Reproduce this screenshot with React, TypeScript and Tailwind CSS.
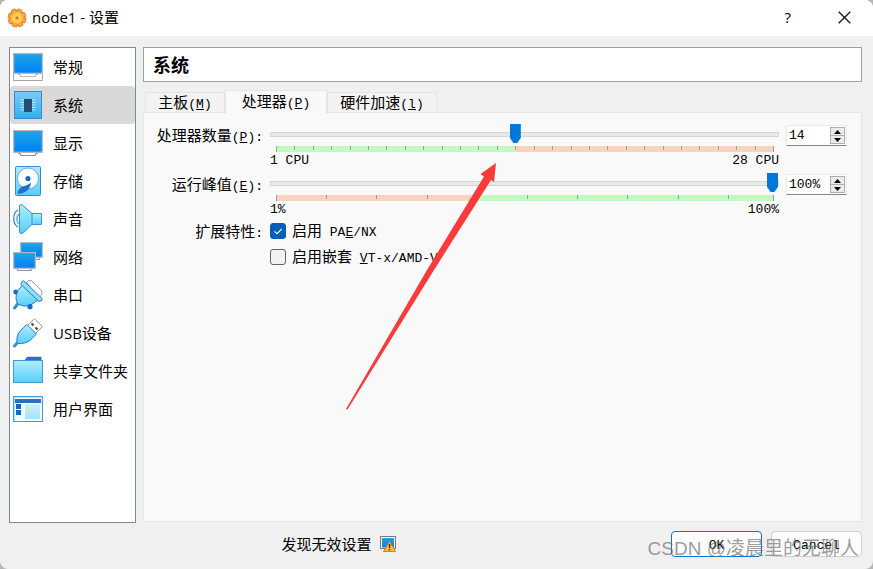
import React, { useState } from 'react';

const Screen: React.FC<{ x: number; y: number; w: number; h: number }> = ({ x, y, w, h }) => (
  <>
    <rect x={x + 0.5} y={y + 0.5} width={w - 1} height={h - 1} fill="#fff" stroke="#b4b8bc" />
    <rect x={x + 1.5} y={y + 1.5} width={w - 3} height={h - 3} fill="url(#screen)" stroke="#0d7fd6" strokeWidth="0.6" />
  </>
);

const categories = [
  {
    name: '常规',
    icon: (
      <>
        <rect x="0.5" y="20.5" width="29" height="8" fill="#fff" stroke="#a3a7ab" />
        <path d="M5.5 21.500v1h2v2h15v-2h2v-1" fill="#fff" stroke="#b4b8bc" />
        <Screen x={0} y={1} w={30} h={21} />
      </>
    ),
  },
  {
    name: '系统',
    icon: (
      <>
        <rect x="1.5" y="1.5" width="27" height="27" fill="url(#board)" stroke="#3c86d2" />
        <path d="M7.5 10h15M7.5 12.5h15M7.5 15h15M7.5 17.5h15M7.5 20h15" stroke="#b5e3f8" />
        <rect x="11" y="9" width="8" height="13" fill="#234e72" />
      </>
    ),
  },
  {
    name: '显示',
    icon: (
      <>
        <path d="M5.5 24v1.5h2v2h15v-2h2V24" fill="#fff" stroke="#8f9397" />
        <Screen x={0} y={2} w={30} h={23} />
      </>
    ),
  },
  {
    name: '存储',
    icon: (
      <>
        <rect x="2.5" y="0.5" width="25" height="29" rx="1" fill="url(#cyan)" stroke="#3c86d2" />
        <circle cx="15" cy="12.5" r="10.5" fill="#fff" stroke="#5a9bdc" strokeWidth="0.8" />
        <circle cx="15" cy="12.5" r="2.6" fill="#1769c4" />
        <path d="M18 16.5c0 4-3 8-6 9.500-3 1.500-5.500 2-7.500 1.500 0-2.500 2-5.500 4.500-7 3-1 6-1 9-4z" fill="#1f6fd0" />
      </>
    ),
  },
  {
    name: '声音',
    icon: (
      <>
        <path d="M5 6C-.7 9-.7 20 5 23" fill="none" stroke="#2f7fd2" strokeWidth="1.2" />
        <path d="M6.500 10C3 12 3 18 6.500 20" fill="none" stroke="#6ab6ee" strokeWidth="1.6" />
        <rect x="18.500" y="9.500" width="10" height="11" rx="0.500" fill="url(#cyan)" stroke="#3c8ed6" />
        <path d="M6.500 1.500Q6.500.5 9 .7L19 9.500v11L9.500 29.300Q6.500 29.700 6.500 28.500z" fill="url(#cyan)" stroke="#3c8ed6" />
      </>
    ),
  },
  {
    name: '网络',
    icon: (
      <>
        <path d="M22 15v2.500h4.500v-2" fill="#fff" stroke="#8f9397" />
        <Screen x={7} y={0} w={23} h={16} />
        <path d="M4.500 26v2.500h14V26" fill="#fff" stroke="#8f9397" />
        <Screen x={0} y={10} w={23} h={17} />
      </>
    ),
  },
  {
    name: '串口',
    icon: (
      <>
        <path d="M13.500 2.500L15.500.6L18.500.8L28.500 10.500L29 14L26 18z" fill="#fff" stroke="#8f9397" />
        <path d="M5 23.500L1.500 28" stroke="#3c8ed6" strokeWidth="3" strokeLinecap="round" />
        <path d="M9.500 5L3.500 12.500Q2 19 4.500 24Q11 27.500 17 25.500L25 20z" fill="url(#cyan)" stroke="#2c7ccc" />
        <path d="M8 2.500L10.500.5L29 18.500V20.500L26 21.500L8 4.500z" fill="#8be0fb" stroke="#2c7ccc" />
        <circle cx="2.600" cy="12" r="2.400" fill="#1769d0" />
        <circle cx="17" cy="26.700" r="2.600" fill="#1769d0" />
      </>
    ),
  },
  {
    name: 'USB设备',
    icon: (
      <>
        <path d="M21.500.7L29.400 8.500L22 16L14 8z" fill="#fff" stroke="#8f9397" />
        <path d="M18.500 5.500l2 2M22.500 9.500l2 2" stroke="#444" strokeWidth="2" />
        <path d="M4.500 24.500L1.500 28" stroke="#3c8ed6" strokeWidth="3" strokeLinecap="round" />
        <path d="M14 6.500L23.500 16L17.500 22Q13 26 5 25.500L4 24.500Q3 17 8 12z" fill="url(#cyan)" stroke="#2c7ccc" />
      </>
    ),
  },
  {
    name: '共享文件夹',
    icon: (
      <>
        <path d="M11.500 4.500L13.500 1.500Q14 .7 15 .7H28.500V5z" fill="#2b6fcb" />
        <rect x="0.500" y="4.500" width="29" height="22" fill="url(#cyan)" stroke="#4596d4" />
      </>
    ),
  },
  {
    name: '用户界面',
    icon: (
      <>
        <rect x="0.500" y="2.500" width="29" height="25" fill="#f5fdff" stroke="#37a0dd" />
        <path d="M1.500 27V3.500H29" fill="none" stroke="#a9e6fb" />
        <rect x="2" y="5" width="26" height="4" fill="#2d6dc6" />
        <rect x="3" y="10" width="5" height="5" fill="#1769c8" />
        <rect x="3" y="16" width="5" height="5" fill="#1769c8" />
        <rect x="12" y="10" width="15" height="15" fill="url(#pane)" />
      </>
    ),
  },
];

const Mono: React.FC<{ children: React.ReactNode }> = ({ children }) => (
  <span className="font-['Liberation_Mono','Noto_Sans_CJK_SC',monospace] text-[13px]">{children}</span>
);

interface ScaleProps {
  ticks: number[];
  left: string;
  right: string;
  barClass: string;
}

const Scale: React.FC<ScaleProps> = ({ ticks, left, right, barClass }) => (
  <>
    <div className={`relative mx-[6px] h-[6px] ${barClass}`}>
      {ticks.map((t) => (
        <span
          key={t}
          className={`absolute top-0 w-px bg-[#a0a090] ${t === 0 || t === 1 ? 'h-[6px]' : 'h-[4px]'}`}
          style={{ left: `${t * 100}%` }}
        />
      ))}
    </div>
    <div className="flex justify-between leading-[17px]">
      <Mono>{left}</Mono>
      <Mono>{right}</Mono>
    </div>
  </>
);

const sliderClass =
  "mb-px block h-[21px] w-full appearance-none bg-transparent outline-none [&::-webkit-slider-runnable-track]:h-[5px] [&::-webkit-slider-runnable-track]:border [&::-webkit-slider-runnable-track]:border-[#d3d6d6] [&::-webkit-slider-runnable-track]:bg-[#e7eaea] [&::-webkit-slider-thumb]:-mt-[9px] [&::-webkit-slider-thumb]:h-[19px] [&::-webkit-slider-thumb]:w-[11px] [&::-webkit-slider-thumb]:appearance-none [&::-webkit-slider-thumb]:bg-[#0078d7] [&::-webkit-slider-thumb]:[clip-path:polygon(0_0,100%_0,100%_72%,68%_100%,32%_100%,0_72%)]";

interface SpinBoxProps {
  id: string;
  label: string;
  value: string;
  onStep: (delta: number) => void;
}

const SpinBox: React.FC<SpinBoxProps> = ({ id, label, value, onStep }) => (
  <div className="mt-px flex h-[21px] border border-b-[#868686] border-[#ececec] bg-white p-px">
    <input
      id={id}
      aria-label={label}
      value={value}
      readOnly
      className="w-0 min-w-0 flex-1 pt-px pl-px font-['Liberation_Mono',monospace] text-[13px] outline-none"
    />
    <div className="flex w-[15px] flex-col">
      <button
        aria-label="增加"
        onClick={() => onStep(1)}
        className="flex flex-1 items-center justify-center border border-[#adadad] bg-[#ececec]"
      >
        <svg width="7" height="4" viewBox="0 0 7 4"><path d="M0 4L3.500 0L7 4z" /></svg>
      </button>
      <button
        aria-label="减少"
        onClick={() => onStep(-1)}
        className="flex flex-1 items-center justify-center border border-t-0 border-[#adadad] bg-[#ececec]"
      >
        <svg width="7" height="4" viewBox="0 0 7 4"><path d="M0 0L3.500 4L7 0z" /></svg>
      </button>
    </div>
  </div>
);

const checkClass = 'peer size-4 appearance-none rounded-[3px] border border-[#626262] bg-[#f3f3f3] checked:border-[#005fb8] checked:bg-[#005fb8]';

const cpuTicks = Array.from({ length: 28 }, (_, i) => i / 27);
const capTicks = [...Array.from({ length: 10 }, (_, i) => (i * 10) / 99), 1];

const App: React.FC = () => {
  const [category, setCategory] = useState('系统');
  const [cpus, setCpus] = useState(14);
  const [cap, setCap] = useState(100);
  const [pae, setPae] = useState(true);
  const [nested, setNested] = useState(false);

  const clamp = (v: number, max: number) => Math.min(max, Math.max(1, v));

  return (
    <div className="bg-[#b5b5b5] font-['Noto_Sans_CJK_SC',sans-serif] text-[15px] text-black">
      <div className="relative flex min-h-screen flex-col overflow-hidden rounded-lg bg-[#f0f0f0]">
        {/* Title bar */}
        <header className="flex h-9 items-center bg-white pr-[22px] pb-px pl-[7px]">
          <svg className="size-5" viewBox="0 0 20 20">
            <defs>
              <radialGradient id="gear"><stop offset="0" stopColor="#ffe070" /><stop offset="0.6" stopColor="#ffd050" /><stop offset="1" stopColor="#fba336" /></radialGradient>
              <linearGradient id="screen" x2="0" y2="1"><stop offset="0" stopColor="#1ba5e4" /><stop offset="1" stopColor="#0080fa" /></linearGradient>
              <linearGradient id="board" x2="0" y2="1"><stop offset="0" stopColor="#79cdf2" /><stop offset="1" stopColor="#33aef0" /></linearGradient>
              <linearGradient id="cyan" x2="0" y2="1"><stop offset="0" stopColor="#b2edfd" /><stop offset="1" stopColor="#55cffa" /></linearGradient>
              <linearGradient id="pane" x2="0" y2="1"><stop offset="0" stopColor="#c9f1fd" /><stop offset="1" stopColor="#a5e4fb" /></linearGradient>
            </defs>
            <circle cx="10" cy="10" r="7.200" fill="none" stroke="#df7028" strokeWidth="4.600" strokeDasharray="4.400 1.250" strokeLinejoin="round" />
            <circle cx="10" cy="10" r="8.300" fill="#df7028" />
            <circle cx="10" cy="10" r="7" fill="none" stroke="#fbac3c" strokeWidth="3.400" strokeDasharray="3.500 2" strokeDashoffset="-0.400" />
            <circle cx="10" cy="10" r="6.800" fill="url(#gear)" />
            <circle cx="10" cy="10" r="1.500" fill="#b9743a" stroke="#ef9a40" />
          </svg>
          <h1 className="ml-[5px] flex-1 font-['Open_Sans','Noto_Sans_CJK_SC',sans-serif]">node1 - 设置</h1>
          <button aria-label="帮助" className="mr-[47px] font-['Open_Sans',sans-serif] text-[15px]">?</button>
          <button aria-label="关闭">
            <svg className="size-[13px]" viewBox="0 0 13 13"><path d="M.7.7l11.600 11.600M12.300.7L.7 12.300" stroke="#111" strokeWidth="1.300" /></svg>
          </button>
        </header>

        <main className="flex flex-1 gap-[7px] pt-[11px] pr-[11px] pl-[9px]">
          {/* Categories */}
          <nav className="w-[127px] border border-[#828790] bg-white font-['Open_Sans','Noto_Sans_CJK_SC',sans-serif]">
            {categories.map((c) => (
              <button
                key={c.name}
                onClick={() => setCategory(c.name)}
                className={`flex h-[38px] w-full items-center gap-[10px] rounded-sm pl-[3px] whitespace-nowrap ${category === c.name ? 'bg-[#d9d9d9]' : ''}`}
              >
                <svg className="size-[30px] shrink-0" viewBox="0 0 30 30">{c.icon}</svg>
                {c.name}
              </button>
            ))}
          </nav>

          <section className="flex flex-1 flex-col pb-px">
            <h2 className="flex h-[35px] items-center border border-[#a0a0a0] bg-white pl-[9px] text-[18px] font-bold">{category}</h2>

            {/* Tabs */}
            <div className="mt-2 flex h-[22px] items-end pl-[2px]" role="tablist">
              <button role="tab" className="h-5 w-[80px] border border-b-0 border-[#e5e5e5] bg-[#f3f3f3] leading-[18px]">
                主板<Mono>(<u>M</u>)</Mono>
              </button>
              <button role="tab" aria-selected="true" className="z-10 -mb-px h-[23px] w-[102px] border border-b-0 border-[#e5e5e5] bg-[#f9f9f9] pb-px leading-5">
                处理器<Mono>(<u>P</u>)</Mono>
              </button>
              <button role="tab" className="h-5 w-[110px] border border-b-0 border-[#e5e5e5] bg-[#f3f3f3] leading-[18px]">
                硬件加速<Mono>(<u>l</u>)</Mono>
              </button>
            </div>

            <div className="grid flex-1 grid-cols-[107px_1fr_61px] content-start gap-x-[7px] border border-[#e5e5e5] bg-[#f9f9f9] pt-[11px] pr-[14px] pl-3">
              <label htmlFor="cpus" className="text-right leading-[21px] whitespace-nowrap">
                处理器数量<Mono>(<u>P</u>):</Mono>
              </label>
              <div className="h-[49px]">
                <input
                  id="cpus"
                  type="range"
                  min={1}
                  max={28}
                  value={cpus}
                  onChange={(e) => setCpus(Number(e.target.value))}
                  className={sliderClass}
                />
                <Scale
                  ticks={cpuTicks}
                  left="1 CPU"
                  right="28 CPU"
                  barClass="bg-linear-to-r from-[#c0fac0] from-48% to-[#fbd2bd] to-48%"
                />
              </div>
              <SpinBox id="cpus-value" label="处理器数量" value={`${cpus}`} onStep={(d) => setCpus(clamp(cpus + d, 28))} />

              <label htmlFor="cap" className="text-right leading-[21px] whitespace-nowrap">
                运行峰值<Mono>(<u>E</u>):</Mono>
              </label>
              <div className="h-[49px]">
                <input
                  id="cap"
                  type="range"
                  min={1}
                  max={100}
                  value={cap}
                  onChange={(e) => setCap(Number(e.target.value))}
                  className={sliderClass}
                />
                <Scale
                  ticks={capTicks}
                  left="1%"
                  right="100%"
                  barClass="bg-linear-to-r from-[#fbd2bd] from-39% to-[#c0fac0] to-41%"
                />
              </div>
              <SpinBox id="cap-value" label="运行峰值" value={`${cap}%`} onStep={(d) => setCap(clamp(cap + d, 100))} />

              <span className="text-right leading-[18px] whitespace-nowrap">
                扩展特性<Mono>:</Mono>
              </span>
              <div className="col-span-2 flex flex-col gap-2 leading-[18px]">
                <label className="relative flex h-[18px] items-center gap-[6px]">
                  <input type="checkbox" checked={pae} onChange={(e) => setPae(e.target.checked)} className={checkClass} />
                  <svg className="absolute left-0 hidden size-4 peer-checked:block" viewBox="0 0 16 16">
                    <path d="M4.500 8.300L7 10.700L11.700 6" fill="none" stroke="#fff" strokeWidth="1.100" />
                  </svg>
                  <span>启用<Mono> PA<u>E</u>/NX</Mono></span>
                </label>
                <label className="flex h-[18px] items-center gap-[6px]">
                  <input type="checkbox" checked={nested} onChange={(e) => setNested(e.target.checked)} className={checkClass} />
                  <span>启用嵌套<Mono> <u>V</u>T-x/AMD-V</Mono></span>
                </label>
              </div>
            </div>
          </section>
        </main>

        <footer className="flex h-[46px] items-start gap-[9px] pt-2 pr-[11px] pl-[15px]">
          <div className="flex h-[26px] flex-1 items-center justify-center gap-2">
            发现无效设置
            <svg className="size-4" viewBox="0 0 16 16">
              <rect x="0.500" y="0.500" width="15" height="12" fill="#fff" stroke="#77797b" />
              <rect x="2" y="2" width="12" height="9.500" fill="url(#screen)" />
              <path d="M9.500 5.500L15.500 15.400H3.500z" fill="#ffc22e" stroke="#e8701a" strokeLinejoin="round" />
              <path d="M9.500 8v4M9.500 13v1.300" stroke="#222" strokeWidth="1.300" />
            </svg>
          </div>
          <button className="h-[26px] w-[91px] rounded border border-[#0078d4] bg-[#fdfdfd]"><Mono>OK</Mono></button>
          <button className="h-[26px] w-[91px] rounded border border-[#d0d0d0] bg-[#fdfdfd]"><Mono>Cancel</Mono></button>
        </footer>

        <div className="pointer-events-none absolute right-[14px] bottom-[6px] font-['Liberation_Sans','Noto_Sans_CJK_SC',sans-serif] text-[19px] leading-7 text-[#707070]/70">
          CSDN @凌晨里的无聊人
        </div>

        {/* Annotation arrow */}
        <svg className="pointer-events-none absolute top-[163px] left-[346px] z-20 h-[247px] w-[151px]" viewBox="0 0 151 247">
          <path d="M150 0L134.500 11L138 13.500L81 107L0 246L1.500 246.500L88 107L145 17L148 19z" fill="#fd3a3a" />
        </svg>
      </div>
    </div>
  );
};

export default App;
